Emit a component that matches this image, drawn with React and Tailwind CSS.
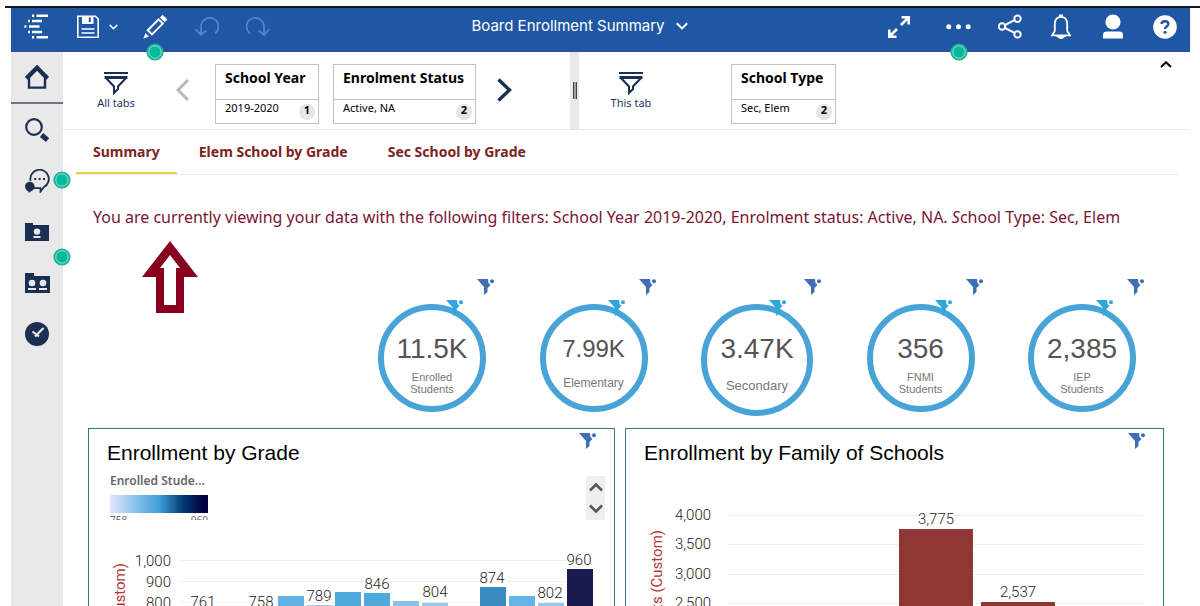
const gradeBars = [
  { x: 189, top: 56, fill: '#63b1e4' },
  { x: 218, top: 65, fill: '#a3cdee' },
  { x: 246, top: 52, fill: '#4fa9dc' },
  { x: 275, top: 53, fill: '#4fa9dc' },
  { x: 304, top: 61, fill: '#8ac1ea' },
  { x: 333, top: 63, fill: '#96c7ec' },
  { x: 391, top: 47, fill: '#3a8bc0' },
  { x: 420, top: 56, fill: '#66b3e5' },
  { x: 449, top: 63, fill: '#96c7ec' },
  { x: 478, top: 29, fill: '#191a4d' },
]

const gradeLabels = [
  { text: '761', x: 114, y: 67 },
  { text: '758', x: 172, y: 67 },
  { text: '789', x: 230, y: 61 },
  { text: '846', x: 288, y: 49 },
  { text: '804', x: 346, y: 57 },
  { text: '874', x: 403, y: 43 },
  { text: '802', x: 461, y: 58 },
  { text: '960', x: 490, y: 25 },
]

const gradeTicks = [
  { text: '1,000', y: 20 },
  { text: '900', y: 41 },
  { text: '800', y: 62 },
]

const familyTicks = [
  { text: '4,000', y: 15 },
  { text: '3,500', y: 44 },
  { text: '3,000', y: 74 },
  { text: '2,500', y: 103 },
]

const kpis = [
  { value: '11.5K', label: ['Enrolled', 'Students'] },
  { value: '7.99K', label: ['Elementary'], size: 'medium' },
  { value: '3.47K', label: ['Secondary'], size: 'large' },
  { value: '356', label: ['FNMI', 'Students'] },
  { value: '2,385', label: ['IEP', 'Students'] },
]

function Beacon({ className }) {
  return (
    <svg className={`absolute z-10 h-[18px] w-[18px] ${className}`} viewBox="0 0 18 18" aria-hidden="true">
      <circle cx="9" cy="9" r="8.6" fill="#1fae96" />
      <circle cx="9" cy="9" r="6.2" fill="#07b89c" stroke="#8fe6d6" strokeWidth="1" />
    </svg>
  )
}

function FilterBadge({ className }) {
  return (
    <svg className={`h-4 w-[17px] ${className}`} viewBox="0 0 17 16" fill="currentColor" aria-hidden="true">
      <path d="M0 0H11L11.5 4L13.5 6L10.5 9V13L7 16V8Z" />
      <circle cx="15" cy="2.2" r="2" />
    </svg>
  )
}

function FunnelIcon() {
  return (
    <svg className="h-6 w-6" viewBox="0 0 24 24" fill="none" stroke="#1b2f52" strokeWidth="2" aria-hidden="true">
      <path d="M0 2H24" />
      <path d="M0.5 6.5H23.5" strokeWidth="3" />
      <path d="M2 7L10 15.5V22L14 18V15.5L22 7" />
    </svg>
  )
}

function Chevron({ d, box, className, width = 2 }) {
  return (
    <svg className={className} viewBox={box} fill="none" stroke="currentColor" strokeWidth={width} aria-hidden="true">
      <path d={d} />
    </svg>
  )
}

function Header() {
  return (
    <header className="flex h-11 items-start justify-between bg-[#1f57a4] pt-[6px] text-white">
      <div className="flex w-[260px] shrink-0 items-center">
        <button aria-label="Home page" className="ml-[13px] h-[25px] w-6">
          <svg viewBox="0 0 24 25" fill="none" stroke="white" strokeWidth="2.4">
            <path d="M12.5 1.8H24M8 1.8H10.2M8 7H18M4 7H6M5 12.5H15.5M0.4 12.5H2.4M8 18H18M4 18H6M12.5 23.2H24M8 23.2H10.2" />
          </svg>
        </button>
        <button aria-label="Save" className="ml-[29px] h-[23px] w-[22px]">
          <svg viewBox="0 0 22 23" fill="none" stroke="white" strokeWidth="1.6">
            <path d="M0.8 1.3H18.5L21.2 4V22.2H0.8Z" />
            <path d="M5 1.3H16.5V9H5Z" fill="white" stroke="none" />
            <path d="M12.8 2.5V7" stroke="#1f57a4" strokeWidth="2" />
            <path d="M4.5 14H17.5M4.5 18H17.5" strokeWidth="1.4" />
          </svg>
        </button>
        <button aria-label="Save options" className="ml-[10px] h-[6px] w-[9px]">
          <Chevron className="h-[6px] w-[9px]" box="0 0 9 6" d="M0.7 0.9L4.5 4.7L8.3 0.9" width={1.5} />
        </button>
        <button aria-label="Edit" className="relative ml-[25px] h-[25px] w-[25px]">
          <svg viewBox="0 0 25 25" fill="none" stroke="white" strokeWidth="2">
            <path d="M4.8 16.2L15.6 5.4L19.8 9.6L9 20.4Z" />
            <path d="M17 3.4L19.6 0.8L24.4 5.6L21.8 8.2Z" fill="white" stroke="none" />
            <path d="M2.4 19L6 22.6L0.3 24.7Z" fill="white" stroke="none" />
          </svg>
          <Beacon className="top-[29px] left-[3px]" />
        </button>
        <button aria-label="Undo" className="ml-[27px] h-5 w-6 text-[#5583c4]">
          <svg viewBox="0 0 24 20" fill="none" stroke="currentColor" strokeWidth="1.8">
            <path d="M20 16.5A8.7 8.7 0 1 0 6 9.5V17M0.8 12.5L6 17.7L11.5 13.5" />
          </svg>
        </button>
        <button aria-label="Redo" className="ml-[27px] h-5 w-6 text-[#5583c4]">
          <svg viewBox="0 0 24 20" fill="none" stroke="currentColor" strokeWidth="1.8">
            <path d="M4 16.5A8.7 8.7 0 1 1 18 9.5V17M23.2 12.5L18 17.7L12.5 13.5" />
          </svg>
        </button>
      </div>

      <button className="flex items-center gap-[11px] font-['Inter','Noto_Sans',sans-serif] text-[15px] leading-6">
        Board Enrollment Summary
        <Chevron className="h-2 w-3" box="0 0 12 8" d="M0.8 1.2L6 6.4L11.2 1.2" />
      </button>

      <div className="flex w-[302px] shrink-0 items-center">
        <button aria-label="Full screen" className="h-[22px] w-[22px]">
          <svg viewBox="0 0 22 22" fill="none" stroke="white" strokeWidth="2.6">
            <path d="M13 9L20 2M13.5 1.3H20.7V8.5M9 13L2 20M1.3 13.5V20.7H8.5" />
          </svg>
        </button>
        <button aria-label="More" className="relative ml-9 h-[25px] w-[25px]">
          <svg viewBox="0 0 25 25" fill="white">
            <circle cx="2.8" cy="12.8" r="2.5" />
            <circle cx="12.5" cy="12.8" r="2.5" />
            <circle cx="22.2" cy="12.8" r="2.5" />
          </svg>
          <Beacon className="top-[29px] left-1" />
        </button>
        <button aria-label="Share" className="ml-[27px] h-[25px] w-6">
          <svg viewBox="0 0 24 25" fill="none" stroke="white" strokeWidth="2">
            <circle cx="4" cy="12.5" r="3.2" />
            <circle cx="19.5" cy="4.8" r="3.2" />
            <circle cx="19.5" cy="20.4" r="3.2" />
            <path d="M7 11L16.5 6.2M7 14L16.5 18.8" />
          </svg>
        </button>
        <button aria-label="Notifications" className="ml-[29px] h-[25px] w-5">
          <svg viewBox="0 0 20 25" fill="none" stroke="white" strokeWidth="1.8">
            <path d="M1 21.4L3.8 17V10C3.8 5.5 6.5 2.8 10 2.8S16.2 5.5 16.2 10V17L19 21.4Z" />
            <path d="M8 1.5H12M7.5 22.8H12.5L10 24.6Z" fill="white" />
          </svg>
        </button>
        <button aria-label="Account" className="ml-8 h-[25px] w-5">
          <svg viewBox="0 0 20 25" fill="white">
            <circle cx="10" cy="8" r="7.6" />
            <path d="M0 24.5V21C0 18.5 1.5 17.5 4 17.5H16C18.5 17.5 20 18.5 20 21V24.5Z" />
          </svg>
        </button>
        <button aria-label="Help" className="ml-[30px] h-6 w-6">
          <svg viewBox="0 0 24 24">
            <circle cx="12" cy="12" r="11.8" fill="white" />
            <path d="M8.6 9C8.6 5.4 15.4 5.4 15.4 9C15.4 11.6 12 11.4 12 14" fill="none" stroke="#1f57a4" strokeWidth="2.4" />
            <circle cx="12" cy="17.2" r="1.5" fill="#1f57a4" />
          </svg>
        </button>
      </div>
    </header>
  )
}

function Sidebar() {
  const item = 'relative flex h-[51px] w-full items-center justify-center'
  return (
    <nav className="w-[52px] shrink-0 bg-[#e9e9e9] text-[#1b2f52]">
      <button aria-label="Home" className="flex h-[52px] w-full items-center justify-center border-b-2 border-[#6d7689]">
        <svg className="h-6 w-6" viewBox="0 0 24 24" fill="none" stroke="currentColor">
          <path d="M1.4 13.5L12 2.8L22.6 13.5" strokeWidth="4.4" />
          <path d="M4 11V22.6H20V11" strokeWidth="2.4" />
        </svg>
      </button>
      <button aria-label="Search" className={item}>
        <svg className="h-6 w-6" viewBox="0 0 24 24" fill="none" stroke="currentColor">
          <circle cx="9" cy="9" r="7.8" strokeWidth="2.2" />
          <path d="M16.5 17L22.5 22" strokeWidth="5" />
        </svg>
      </button>
      <button aria-label="Conversations" className={item}>
        <svg className="h-6 w-[25px]" viewBox="0 0 25 24" fill="none" stroke="currentColor" strokeWidth="1.8">
          <path d="M5.6 12A9.2 9.2 0 1 1 19 18L15.5 22.5V19.2H9" />
          <circle cx="4.8" cy="17.6" r="4.8" fill="currentColor" stroke="none" />
          <path d="M2 20L4 24L7 21Z" fill="currentColor" stroke="none" />
          <path d="M9.2 10H11.2M13.6 10H15.6M18 10H20" strokeWidth="2" />
        </svg>
        <Beacon className="top-4 -right-2" />
      </button>
      <button aria-label="My content" className={item}>
        <svg className="h-[18px] w-6" viewBox="0 0 24 18" fill="currentColor">
          <path d="M0 0H8V2H24V18H0Z" />
          <circle cx="12" cy="8.6" r="3.2" fill="#e9e9e9" />
          <path d="M8.5 13H15.5V15H8.5Z" fill="#e9e9e9" />
        </svg>
        <Beacon className="-right-2 -bottom-[9px]" />
      </button>
      <button aria-label="Team content" className={item}>
        <svg className="h-5 w-[25px]" viewBox="0 0 25 20" fill="currentColor">
          <path d="M0 0H9V3H25V20H0Z" />
          <circle cx="7" cy="10" r="3.3" fill="#e9e9e9" />
          <circle cx="18" cy="10" r="3.3" fill="#e9e9e9" />
          <path d="M3 15H11V17H3ZM14 15H22V17H14Z" fill="#e9e9e9" />
        </svg>
      </button>
      <button aria-label="Recent" className={item}>
        <svg className="h-6 w-6" viewBox="0 0 24 24" fill="none" stroke="#e9e9e9" strokeWidth="2.2">
          <circle cx="12" cy="12" r="12" fill="#1b2f52" stroke="none" />
          <path d="M7.5 9.5L14 14.5M18.5 6L10 14.5" />
        </svg>
      </button>
    </nav>
  )
}

function FilterCard({ title, value, count, className }) {
  return (
    <button className={`flex h-[60px] shrink-0 flex-col border border-[#c2c2c2] text-left text-black ${className}`}>
      <span className="block h-[35px] w-full border-b border-[#c2c2c2] pt-[3px] pl-[9px] text-[14px] leading-5 font-bold whitespace-nowrap">{title}</span>
      <span className="flex w-full items-start justify-between pr-[3px] pl-[9px] text-[11px] leading-4">
        <span>{value}</span>
        <span className="mt-1 h-4 w-4 rounded-full bg-[#e6e6e6] text-center text-[11px] leading-3 font-bold">{count}</span>
      </span>
    </button>
  )
}

function FilterBar() {
  return (
    <div className="flex h-[78px] items-start border-b border-[#e6e6e6]">
      <div className="mt-[19px] ml-[32px] flex w-[42px] shrink-0 flex-col items-center text-[11px] leading-4 whitespace-nowrap text-[#25375a]">
        <FunnelIcon />
        All tabs
      </div>
      <button aria-label="Previous filters" className="mt-[27px] ml-[39px] h-[22px] w-[13px] text-[#b9b9b9]">
        <Chevron className="h-[22px] w-[13px]" box="0 0 13 22" d="M12 1L2 11L12 21" width={3} />
      </button>
      <FilterCard title="School Year" value="2019-2020" count="1" className="mt-3 ml-[26px] w-[104px]" />
      <FilterCard title="Enrolment Status" value="Active, NA" count="2" className="mt-3 ml-[14px] w-[143px]" />
      <button aria-label="Next filters" className="mt-[26px] ml-[21px] h-6 w-[15px] text-[#1b2f52]">
        <Chevron className="h-6 w-[15px]" box="0 0 15 24" d="M1.5 1.5L12.5 12L1.5 22.5" width={3.4} />
      </button>
      <div className="ml-[58px] flex w-[9px] shrink-0 items-center justify-center self-stretch bg-[#e9e9e9]">
        <div className="h-[17px] w-1 border-x border-[#444444] bg-[#a0a0a0]" />
      </div>
      <div className="mt-[19px] ml-[31px] flex w-[42px] shrink-0 flex-col items-center text-[11px] leading-4 whitespace-nowrap text-[#25375a]">
        <FunnelIcon />
        This tab
      </div>
      <FilterCard title="School Type" value="Sec, Elem" count="2" className="mt-3 ml-[79px] w-[105px]" />
      <button aria-label="Collapse filters" className="mt-[9px] mr-[18px] ml-auto h-[7px] w-3">
        <Chevron className="h-[7px] w-3" box="0 0 12 7" d="M1 6L6 1.2L11 6" />
      </button>
    </div>
  )
}

function Tabs() {
  return (
    <nav className="mr-3 ml-[13px] flex h-[45px] border-b border-[#ececec] text-[14px] leading-[44px] font-bold whitespace-nowrap text-[#7d2323]">
      <a href="#summary" className="h-11 border-b-2 border-[#e3d04b] px-[17px]">Summary</a>
      <a href="#elem" className="ml-[22px]">Elem School by Grade</a>
      <a href="#sec" className="ml-10">Sec School by Grade</a>
    </nav>
  )
}

function Kpi({ value, label, size }) {
  let circle = 'h-[108px] w-[108px] pt-6'
  let valueText = 'text-[28px]'
  let labelText = 'mt-[7px] text-[11px] leading-3'
  if (size === 'medium') {
    valueText = 'text-[24px]'
    labelText = 'mt-[13px] text-[12px] leading-3'
  } else if (size === 'large') {
    circle = 'h-[112px] w-[112px] pt-6'
    labelText = 'mt-4 text-[13px] leading-3'
  }

  return (
    <div className="flex flex-col pr-2 font-['Liberation_Sans',Arial,sans-serif]">
      <FilterBadge className="-mr-2 self-end text-[#3e6fb6]" />
      <div className={`relative mt-[9px] flex flex-col items-center rounded-full border-6 border-[#48a4d6] text-center ${circle}`}>
        <FilterBadge className="absolute -top-[10px] left-[62px] text-[#2fa5dd]" />
        <p className={`h-[30px] leading-[30px] text-[#555555] ${valueText}`}>{value}</p>
        <p className={`text-[#777777] ${labelText}`}>
          {label.map((line) => (
            <span key={line} className="block">{line}</span>
          ))}
        </p>
      </div>
    </div>
  )
}

function GradePanel() {
  return (
    <section className="h-[240px] flex-[527] border border-[#3a7488]">
      <div className="flex items-start justify-between pr-[18px] pl-[18px]">
        <h2 className="pt-3 font-['Liberation_Sans',Arial,sans-serif] text-[21px] leading-6 text-black">Enrollment by Grade</h2>
        <FilterBadge className="mt-1 text-[#3e6fb6]" />
      </div>
      <div className="flex items-start justify-between pr-[9px] pl-[21px]">
        <div className="mt-2 w-[98px]">
          <p className="text-[12px] leading-4 font-semibold whitespace-nowrap text-[#666666]">Enrolled Stude...</p>
          <div className="mt-[6px] h-[18px] bg-[linear-gradient(90deg,#e4e6fb,#9ccbef_20%,#3f9fd8_50%,#003a70_75%,#00003f_95%)]" />
          <div className="mt-[3px] flex h-1 justify-between overflow-hidden text-[10px] leading-[8px] text-[#666666]">
            <span>758</span>
            <span>960</span>
          </div>
        </div>
        <div className="mt-[11px] flex h-11 w-[19px] flex-col items-center justify-between bg-[#efefef] py-[6px] text-[#555555]">
          <button aria-label="Scroll legend up">
            <Chevron className="h-[10px] w-[14px]" box="0 0 14 10" d="M1 8.5L7 2.5L13 8.5" width={2.6} />
          </button>
          <button aria-label="Scroll legend down">
            <Chevron className="h-[10px] w-[14px]" box="0 0 14 10" d="M1 1.5L7 7.5L13 1.5" width={2.6} />
          </button>
        </div>
      </div>
      <svg className="mt-5 w-full font-['Roboto',sans-serif] text-[15px] font-light" viewBox="0 0 525 120" fill="#222222">
        {gradeTicks.map((tick) => (
          <g key={tick.text}>
            <path d={`M92 ${tick.y + 0.5}H504`} stroke="#eeeeee" />
            <text x="82" y={tick.y + 6} textAnchor="end">{tick.text}</text>
          </g>
        ))}
        {gradeBars.map((bar) => (
          <rect key={bar.x} x={bar.x} y={bar.top} width="26" height={120 - bar.top} fill={bar.fill} />
        ))}
        {gradeLabels.map((label) => (
          <text key={label.text} x={label.x} y={label.y} textAnchor="middle" stroke="white" strokeWidth="3" className="[paint-order:stroke]">{label.text}</text>
        ))}
        <text transform="translate(36 23) rotate(-90)" textAnchor="end" fill="#b53434" className="font-normal">Enrolled Students (Custom)</text>
      </svg>
    </section>
  )
}

function FamilyPanel() {
  return (
    <section className="h-[240px] flex-[539] border border-[#3a7488]">
      <div className="flex items-start justify-between pr-[18px] pl-[18px]">
        <h2 className="pt-3 font-['Liberation_Sans',Arial,sans-serif] text-[21px] leading-6 text-black">Enrollment by Family of Schools</h2>
        <FilterBadge className="mt-1 text-[#3e6fb6]" />
      </div>
      <svg className="mt-[35px] w-full font-['Roboto',sans-serif] text-[15px] font-light" viewBox="0 0 537 160" fill="#222222">
        {familyTicks.map((tick) => (
          <g key={tick.text}>
            <path d={`M102 ${tick.y + 0.5}H517`} stroke="#eeeeee" />
            <text x="85" y={tick.y + 5} textAnchor="end">{tick.text}</text>
          </g>
        ))}
        <rect x="273" y="29" width="74" height="131" fill="#8f3735" />
        <rect x="355" y="102" width="74" height="58" fill="#8f3735" />
        <text x="310" y="24" textAnchor="middle" stroke="white" strokeWidth="3" className="[paint-order:stroke]">3,775</text>
        <text x="392" y="97" textAnchor="middle" stroke="white" strokeWidth="3" className="[paint-order:stroke]">2,537</text>
        <text transform="translate(36 30) rotate(-90)" textAnchor="end" fill="#b53434" className="font-normal">Enrolled Students (Custom)</text>
      </svg>
    </section>
  )
}

export default function App() {
  return (
    <div className="flex h-screen flex-col overflow-hidden bg-white pt-[6px] font-['Noto_Sans','Open_Sans',sans-serif]">
      <div className="ml-[5px] h-[2px] shrink-0 bg-[#0d1a22]" />
      <div className="mr-[10px] ml-[11px] flex min-h-0 flex-1 flex-col">
        <Header />
        <div className="flex min-h-0 flex-1">
          <Sidebar />
          <main className="min-w-0 flex-1">
            <FilterBar />
            <Tabs />
            <p className="mt-[30px] ml-[30px] text-[16px] leading-6 whitespace-nowrap text-[#7a1533]">
              You are currently viewing your data with the following filters: School Year 2019-2020, Enrolment status: Active, NA. <em>S</em>chool Type: Sec, Elem
            </p>
            <div className="mt-3 flex items-start justify-between pr-[46px] pl-[79px]">
              <svg className="h-[72px] w-14 shrink-0" viewBox="0 0 56 72" aria-hidden="true">
                <path d="M28 0L56 36H42V72H14V36H0Z" fill="#870020" />
                <path d="M28 14L38 27H34V64H22V27H18Z" fill="white" />
              </svg>
              <div className="mt-[38px] flex w-[766px] items-start justify-between">
                {kpis.map((kpi) => (
                  <Kpi key={kpi.value} {...kpi} />
                ))}
              </div>
            </div>
            <div className="mt-[12px] mr-[26px] ml-[25px] flex gap-[10px]">
              <GradePanel />
              <FamilyPanel />
            </div>
          </main>
        </div>
      </div>
    </div>
  )
}
